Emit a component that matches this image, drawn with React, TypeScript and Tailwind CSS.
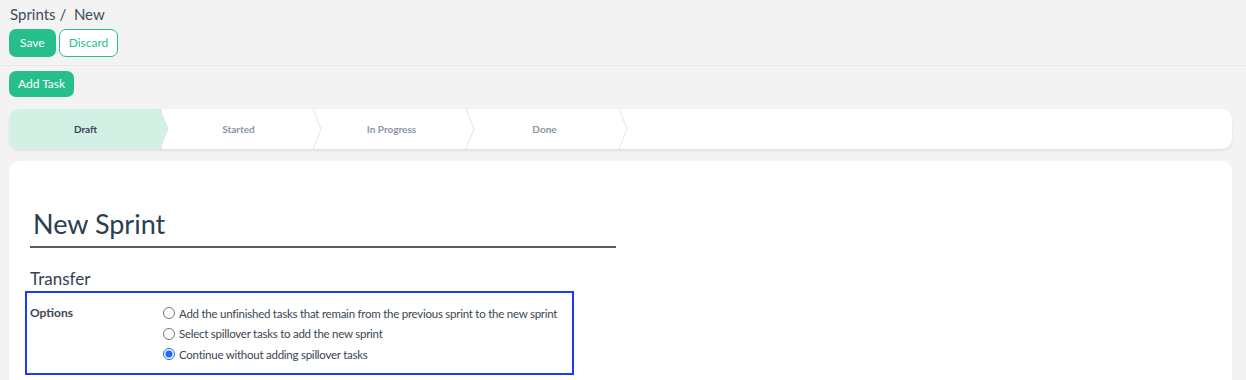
import { useState } from 'react';

const steps = ['Draft', 'Started', 'In Progress', 'Done'];

const options = [
  'Add the unfinished tasks that remain from the previous sprint to the new sprint',
  'Select spillover tasks to add the new sprint',
  'Continue without adding spillover tasks',
];

// Chevron divider drawn at the right edge of a step
function Chevron({ filled }: { filled: boolean }) {
  return (
    <svg
      className="absolute top-0 -right-[9px] z-10"
      width="12"
      height="40"
      viewBox="0 0 12 40"
    >
      {filled && <polygon points="0,0 1,0 9,20 1,40 0,40" fill="#d2f1e4" />}
      <polyline points="1,0 9,20 1,40" fill="none" stroke="#e2e4e8" strokeWidth="1" />
    </svg>
  );
}

export default function App(): JSX.Element {
  const [choice, setChoice] = useState(2);

  return (
    <div className="min-h-[380px] bg-[#f3f3f3] font-['Lato',sans-serif] text-[#2c3e50]">
      {/* Breadcrumb + actions */}
      <div className="px-[9px] pt-[4px] pb-[8px] border-b border-[#e8e8e8]">
        <div className="pl-[1px] text-[15px] leading-[20px] text-[#3f4b5b]">
          Sprints / &nbsp;New
        </div>
        <div className="mt-[5px] flex gap-[3px]">
          <button className="h-[28px] px-[11px] rounded-[7px] bg-[#26bf8c] text-white text-[12px]">
            Save
          </button>
          <button className="h-[28px] px-[9px] rounded-[7px] bg-white border border-[#26bf8c] text-[#26bf8c] text-[12px]">
            Discard
          </button>
        </div>
      </div>

      <div className="px-[9px] pt-[4px]">
        <button className="h-[26px] px-[9px] rounded-[7px] bg-[#26bf8c] text-white text-[12px]">
          Add Task
        </button>

        {/* Stage stepper */}
        <div className="mt-[12px] mr-[5px] h-[40px] bg-white rounded-[10px] shadow-[0_2px_3px_rgba(0,0,0,0.08)] flex">
          {steps.map((s, i) => (
            <div
              key={s}
              className={
                'relative w-[153px] flex items-center justify-center text-[10px] font-bold ' +
                (i === 0 ? 'bg-[#d2f1e4] text-[#3b4656] rounded-l-[10px]' : 'text-[#8c95a3]')
              }
            >
              {s}
              <Chevron filled={i === 0} />
            </div>
          ))}
        </div>

        {/* Form card */}
        <div className="mt-[12px] mr-[5px] h-[240px] bg-white rounded-[10px] px-[21px] pt-[45px]">
          <div className="w-[586px] border-b-2 border-[#5a5a5a] pb-[4px]">
            <h1 className="pl-[3px] text-[27px] leading-[36px] text-[#2c3e50]">New Sprint</h1>
          </div>
          <h2 className="mt-[20px] text-[17px] leading-[22px] text-[#34404f]">Transfer</h2>

          <div className="mt-[1px] -ml-[5px] w-[549px] border-2 border-[#1c3df5] flex pt-[10px] pb-[8px]">
            <div className="w-[136px] pl-[3px] text-[12px] font-bold text-[#3a4553] leading-[20px]">
              Options
            </div>
            <div className="flex flex-col">
              {options.map((o, i) => (
                <label
                  key={o}
                  className="flex items-center gap-[4px] h-[20.5px] whitespace-nowrap text-[11.5px] tracking-[-0.25px] text-[#3a4553] cursor-pointer"
                >
                  <input
                    type="radio"
                    name="transfer"
                    checked={choice === i}
                    onChange={() => setChoice(i)}
                    className="w-[12px] h-[12px] m-0 accent-[#1a6df0]"
                  />
                  {o}
                </label>
              ))}
            </div>
          </div>
        </div>
      </div>
    </div>
  );
}
